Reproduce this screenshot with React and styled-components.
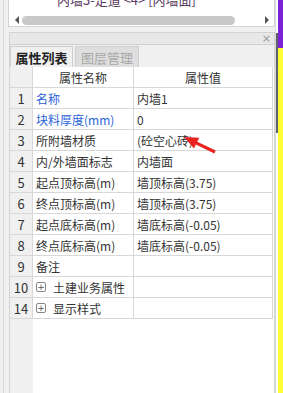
import React from 'react';
import styled, { createGlobalStyle } from 'styled-components';

const Global = createGlobalStyle`
  html, body {
    margin: 0;
    padding: 0;
    background: #f0f0f0;
    overflow: hidden;
  }
  body {
    font-family: "Noto Sans CJK SC", "Microsoft YaHei", sans-serif;
    font-size: 12px;
    color: #333;
  }
`;

const Screen = styled.div`
  width: 283px;
  height: 393px;
  display: flex;
  overflow: hidden;
`;

const Main = styled.div`
  width: 275px;
  display: flex;
  flex-direction: column;
  padding-left: 3px;
  box-sizing: border-box;
  background: linear-gradient(to right, #f0f0f0 0, #f0f0f0 3px, #dadada 3px, #dadada 4px, #f0f0f0 4px);
`;

const TopPanel = styled.div`
  flex: 0 0 27px;
  margin-left: 5px;
  background: #fff;
  border: 1px solid #d4d4d4;
  border-top: 0;
  box-sizing: border-box;
  overflow: hidden;
  display: grid;
  grid-template-rows: 9px 10px;
  row-gap: 6px;
  align-content: start;
`;

const Clipped = styled.div`
  overflow: hidden;
  padding-left: 48px;
  font-size: 13px;
  color: #5a3a60;
  white-space: nowrap;
  line-height: 0;
`;

const ClippedLine = styled.div`
  margin-top: -9px;
  height: 18px;
  line-height: 18px;
`;

const HScroll = styled.div`
  display: flex;
  align-items: center;
  padding: 0 5px 0 6px;
  gap: 3px;
`;

const Arrow = styled.div`
  flex: none;
  width: 0;
  height: 0;
  border-top: 4px solid transparent;
  border-bottom: 4px solid transparent;
  ${p => (p.$dir === 'left' ? 'border-right: 4px solid #555;' : 'border-left: 4px solid #555;')}
`;

const Thumb = styled.div`
  flex: none;
  width: 213px;
  height: 9px;
  border-radius: 5px;
  background: #c8c8c8;
`;

const Track = styled.div`
  flex: 1;
`;

const Panel = styled.div`
  margin-top: 5px;
  margin-left: 6px;
  flex: 1;
  display: flex;
  flex-direction: column;
  border-left: 1px solid #d4d4d4;
  border-right: 1px solid #d4d4d4;
  background: #fff;
`;

const PanelHead = styled.div`
  height: 11px;
  background: #e8e8e8;
  border-top: 1px solid #d4d4d4;
  display: flex;
  justify-content: flex-end;
  align-items: center;
  padding-right: 3px;
  color: #9a9a9a;
  font-size: 11px;
  line-height: 11px;
  font-family: "DejaVu Sans", sans-serif;
`;

const Tabs = styled.div`
  height: 23px;
  display: flex;
  gap: 2px;
  background: #f0f0f0;
  border-top: 1px solid #d0d0d0;
  box-sizing: border-box;
  padding-top: 1px;
`;

const Tab = styled.div`
  width: ${p => p.$w}px;
  display: flex;
  align-items: center;
  justify-content: center;
  font-size: 13px;
  box-sizing: border-box;
  border: 1px solid #cfcfcf;
  border-bottom: 0;
  background: ${p => (p.$active ? '#f0f0f0' : '#dedede')};
  color: ${p => (p.$active ? '#222' : '#a8a8a8')};
  font-weight: ${p => (p.$active ? 600 : 400)};
`;

const Grid = styled.div`
  flex: 1;
  position: relative;
  display: grid;
  grid-template-columns: 23px 101px 139px;
  grid-auto-rows: 21px;
  align-content: start;
  background: linear-gradient(to right, #f0f0f0 0, #f0f0f0 23px, #fff 23px);
`;

const Cell = styled.div`
  box-sizing: border-box;
  border-right: 1px solid #d8d8d8;
  border-bottom: 1px solid #d8d8d8;
  display: flex;
  align-items: center;
  white-space: nowrap;
  overflow: hidden;
  padding-left: ${p => (p.$center ? 0 : 3)}px;
  justify-content: ${p => (p.$center ? 'center' : 'flex-start')};
  background: ${p => (p.$num ? '#f0f0f0' : '#fff')};
  color: ${p => (p.$blue ? '#2a62d8' : '#333')};
  font-size: ${p => (p.$num ? 13 : 12)}px;
`;

const Plus = styled.span`
  width: 8px;
  height: 8px;
  border: 1px solid #888;
  border-radius: 2px;
  display: inline-flex;
  align-items: center;
  justify-content: center;
  font-size: 9px;
  line-height: 8px;
  color: #555;
  margin-right: 7px;
  font-family: "DejaVu Sans", sans-serif;
`;

const Note = styled.svg`
  position: absolute;
  left: 172px;
  top: 68px;
`;

const Side = styled.div`
  width: 8px;
  display: flex;
`;

const ScrollStrip = styled.div`
  width: 3px;
  background: linear-gradient(to bottom, #fff 0, #fff 33px, #5d646c 33px, #5d646c 133px, #fff 133px);
  border-left: 1px solid #d8d8d8;
  box-sizing: border-box;
`;

const Color = styled.div`
  flex: 1;
  background: linear-gradient(to bottom, #7a22d8 0, #7a22d8 48px, #ffff33 48px);
`;

const rows = [
  ['1', '名称', '内墙1', true],
  ['2', '块料厚度(mm)', '0', true],
  ['3', '所附墙材质', '(砼空心砖)'],
  ['4', '内/外墙面标志', '内墙面'],
  ['5', '起点顶标高(m)', '墙顶标高(3.75)'],
  ['6', '终点顶标高(m)', '墙顶标高(3.75)'],
  ['7', '起点底标高(m)', '墙底标高(-0.05)'],
  ['8', '终点底标高(m)', '墙底标高(-0.05)'],
  ['9', '备注', ''],
  ['10', '土建业务属性', '', false, true],
  ['14', '显示样式', '', false, true],
];

export default function App() {
  return (
    <Screen>
      <Global />
      <Main>
        <TopPanel>
          <Clipped>
            <ClippedLine>内墙3-走道 &lt;4&gt; [内墙面]</ClippedLine>
          </Clipped>
          <HScroll>
            <Arrow $dir="left" />
            <Thumb />
            <Track />
            <Arrow $dir="right" />
          </HScroll>
        </TopPanel>
        <Panel>
          <PanelHead>×</PanelHead>
          <Tabs>
            <Tab $active $w={63}>属性列表</Tab>
            <Tab $w={64}>图层管理</Tab>
          </Tabs>
          <Grid>
            <Cell $num />
            <Cell $center>属性名称</Cell>
            <Cell $center>属性值</Cell>
            {rows.map(([n, name, value, blue, group]) => (
              <React.Fragment key={n}>
                <Cell $num $center>{n}</Cell>
                <Cell $blue={blue}>
                  {group && <Plus>+</Plus>}
                  {name}
                </Cell>
                <Cell>{value}</Cell>
              </React.Fragment>
            ))}
            <Note width="36" height="22" viewBox="0 0 36 22">
              <polygon
                points="2,2 17.2,2.7 15.3,6.7 33.7,15.6 32.3,18.4 13.9,9.5 12,13.5"
                fill="#e8231f"
              />
            </Note>
          </Grid>
        </Panel>
      </Main>
      <Side>
        <ScrollStrip />
        <Color />
      </Side>
    </Screen>
  );
}
